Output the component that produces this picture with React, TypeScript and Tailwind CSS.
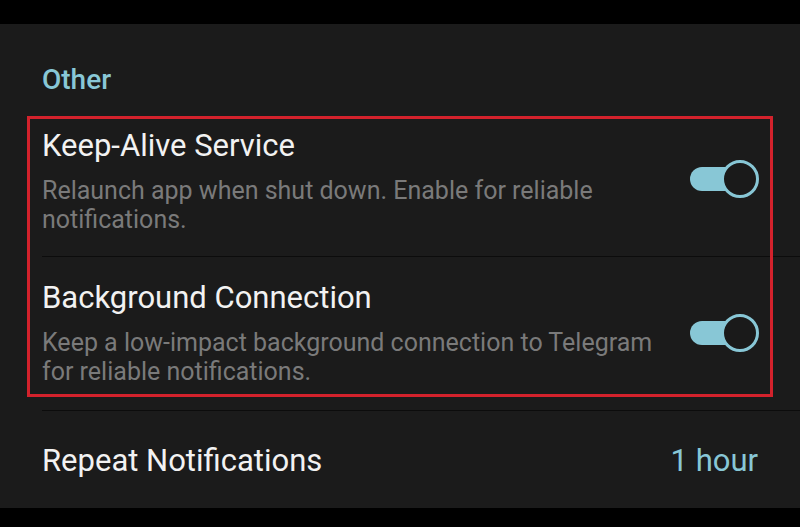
import React from "react";

const accent = "#88c7d6";

function Toggle({ offset }: { offset: string }) {
  return (
    <div className={`relative h-[38px] w-[70px] shrink-0 ${offset}`}>
      <div className="absolute left-0 top-[7px] h-[24px] w-[54px] rounded-full bg-[#88c7d6]" />
      <div className="absolute right-[1px] top-0 h-[38px] w-[38px] rounded-full border-[3px] border-[#88c7d6] bg-[#1a1a1a]" />
    </div>
  );
}

function SwitchRow({
  title,
  desc,
  box,
  toggleOffset,
}: {
  title: string;
  desc: string;
  box: string;
  toggleOffset: string;
}) {
  return (
    <div className={`flex items-start justify-between pl-[42px] pr-[40px] ${box}`}>
      <div className="w-[630px]">
        <div className="text-[31px] leading-[36px] text-[#f2f2f2]">{title}</div>
        <div className="mt-[12px] text-[25px] leading-[29px] text-[#7a7a7a]">{desc}</div>
      </div>
      <Toggle offset={toggleOffset} />
    </div>
  );
}

export default function App() {
  return (
    <div
      className="flex h-[527px] w-[800px] flex-col bg-black pt-[24px] pb-[19px]"
      style={{ fontFamily: "Roboto, 'Noto Sans', sans-serif" }}
    >
      <div className="relative flex flex-1 flex-col bg-[#1b1b1b]">
        <div
          className="h-[73px] pl-[42px] pt-[39px] text-[28px] leading-[34px] font-medium"
          style={{ color: accent }}
        >
          Other
        </div>
        <SwitchRow
          title="Keep-Alive Service"
          desc="Relaunch app when shut down. Enable for reliable notifications."
          box="h-[159px] pt-[31px]"
          toggleOffset="mt-[32px]"
        />
        <div className="ml-[42px] h-px bg-[#0c0c0c]" />
        <SwitchRow
          title="Background Connection"
          desc="Keep a low-impact background connection to Telegram for reliable notifications."
          box="h-[153px] pt-[23px]"
          toggleOffset="mt-[34px]"
        />
        <div className="ml-[42px] h-px bg-[#0c0c0c]" />
        <div className="flex flex-1 items-center justify-between pl-[42px] pr-[42px] pt-[3px]">
          <span className="text-[31px] text-[#f2f2f2]">Repeat Notifications</span>
          <span className="text-[31px]" style={{ color: accent }}>
            1 hour
          </span>
        </div>
        {/* annotation frame */}
        <div className="pointer-events-none absolute left-[27px] top-[92px] h-[281px] w-[746px] border-[3px] border-[#d3222c]" />
      </div>
    </div>
  );
}
